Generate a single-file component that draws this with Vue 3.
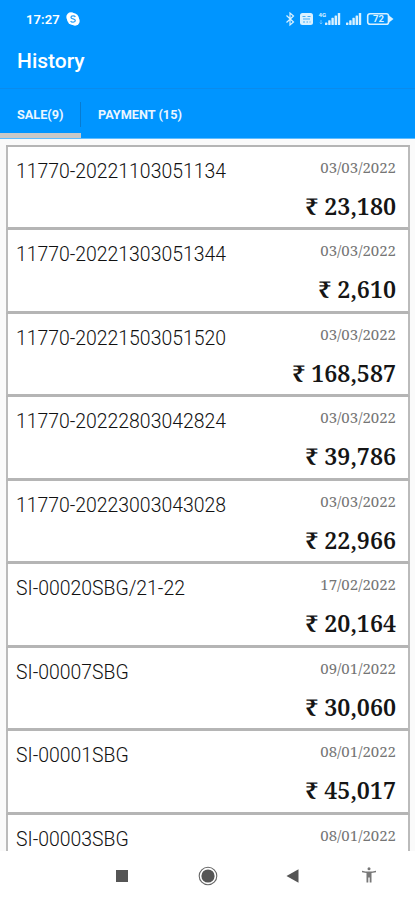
<template>
  <div class="screen">
    <header class="header">
      <div class="status-bar">
        <span class="clock">17:27</span>
        <svg class="skype" viewBox="0 0 14 14">
          <circle cx="5" cy="5" r="4.7" fill="#fff" />
          <circle cx="9" cy="9" r="4.7" fill="#fff" />
          <circle cx="7" cy="7" r="6" fill="#fff" />
          <path d="M9.300 5C8.700 3.500 5 3.500 5 5.400c0 2 4.300 1.100 4.300 3.200 0 2-3.900 2-4.600.3" fill="none" stroke="#2ba0f4" stroke-width="1.3" />
        </svg>
        <svg class="indicators" viewBox="0 0 110 16">
          <path d="M1.500 4.500l7 6.500L5 14V2l3.500 3-7 6.500" fill="none" stroke="#d9f1ff" stroke-width="1.200" />
          <rect x="15" y="2" width="13" height="12" rx="2.5" fill="#d9f1ff" />
          <path d="M17.500 5.500h3m2 0h3M18 8h7M18 11h2m1.500 0h1.500m1.500 0h1" stroke="#45adf8" stroke-width="1.100" />
          <text x="33.5" y="6" class="network">4G</text>
          <path d="M36 9v4m-1.300-1.300L36 13l1.300-1.300" fill="none" stroke="#7fc9ff" stroke-width=".8" />
          <g v-for="x in [40, 61]" :key="x" fill="#d9f1ff">
            <rect
              v-for="n in 5"
              :key="n"
              :x="x + (n - 1) * 3.2"
              :y="14 - n * 2.4"
              width="2.4"
              :height="n * 2.4"
              rx=".6"
            />
          </g>
          <path d="M85 2.700h16.500a2 2 0 0 1 2 2v6.600a2 2 0 0 1-2 2H85a2.300 2.300 0 0 1-2.300-2.300V5A2.300 2.300 0 0 1 85 2.700z" fill="none" stroke="#d9f1ff" stroke-width="1.6" />
          <path d="M104 4.500l4.500 3.500-4.500 3.500z" fill="#d9f1ff" />
          <text x="88" y="11.3" class="charge">72</text>
        </svg>
      </div>
      <h1 class="title">History</h1>
      <nav class="tabs">
        <button class="tab active">SALE(9)</button>
        <button class="tab">PAYMENT (15)</button>
      </nav>
    </header>

    <main class="content">
      <div class="list">
        <article v-for="item in sales" :key="item.id" class="card">
          <span class="number">{{ item.id }}</span>
          <div class="details">
            <span class="date">{{ item.date }}</span>
            <span v-if="item.amount" class="amount">₹ {{ item.amount }}</span>
          </div>
        </article>
      </div>
    </main>

    <footer class="nav-bar">
      <svg viewBox="0 0 24 24"><rect x="6" y="6" width="12" height="12" fill="#555" /></svg>
      <svg viewBox="0 0 24 24">
        <circle cx="12" cy="12" r="8.8" fill="none" stroke="#666" stroke-width="1.1" />
        <circle cx="12" cy="12" r="6.6" fill="#555" />
      </svg>
      <svg viewBox="0 0 24 24"><path d="M5.500 12L17.500 5.300v13.400z" fill="#555" /></svg>
      <svg class="accessibility" viewBox="0 0 24 24">
        <circle cx="12" cy="4.800" r="1.5" fill="#777" />
        <path d="M5 6.700q7 1.700 14 0v1.500l-4.500.8V18.500H12.700v-5h-1.400v5H9.500V9L5 8.200z" fill="#777" />
      </svg>
    </footer>
  </div>
</template>

<script setup>
const sales = [
  { id: '11770-20221103051134', date: '03/03/2022', amount: '23,180' },
  { id: '11770-20221303051344', date: '03/03/2022', amount: '2,610' },
  { id: '11770-20221503051520', date: '03/03/2022', amount: '168,587' },
  { id: '11770-20222803042824', date: '03/03/2022', amount: '39,786' },
  { id: '11770-20223003043028', date: '03/03/2022', amount: '22,966' },
  { id: 'SI-00020SBG/21-22', date: '17/02/2022', amount: '20,164' },
  { id: 'SI-00007SBG', date: '09/01/2022', amount: '30,060' },
  { id: 'SI-00001SBG', date: '08/01/2022', amount: '45,017' },
  { id: 'SI-00003SBG', date: '08/01/2022' },
];
</script>

<style>
body {
  margin: 0;
}
</style>

<style scoped>
.screen {
  display: flex;
  flex-direction: column;
  height: 900px;
  overflow: hidden;
  background: #fff;
  font-family: Roboto, sans-serif;
}

.header {
  flex: none;
  height: 138px;
  background: #0095ff;
  color: #fff;
  border-bottom: 1px solid #5fbdff;
}

.status-bar {
  display: flex;
  align-items: center;
  height: 38px;
  padding: 0 20px 0 26px;
}

.clock {
  width: 40px;
  font-size: 13px;
  font-weight: 600;
  letter-spacing: 0.1px;
}

.skype {
  width: 14px;
  height: 14px;
}

.indicators {
  width: 110px;
  height: 16px;
  margin-left: auto;
}

.network {
  font-size: 6px;
  font-weight: 700;
  fill: #d9f1ff;
}

.charge {
  font-size: 9.5px;
  font-weight: 700;
  fill: #d9f1ff;
}

.title {
  box-sizing: border-box;
  height: 51px;
  margin: 0;
  padding: 9px 17px 0;
  border-bottom: 1px solid #0b8bec;
  font-size: 21px;
  font-weight: 500;
  line-height: 28px;
}

.tabs {
  display: flex;
  height: 49px;
}

.tab {
  position: relative;
  padding: 7px 17px 0;
  border: 0;
  border-bottom: 5px solid transparent;
  background: none;
  color: #eaf6ff;
  font: 700 12.7px Roboto, sans-serif;
}

.tab.active {
  width: 81px;
  padding-right: 0;
  text-align: left;
  border-bottom-color: #c8c8c8;
}

.tab.active::after {
  content: '';
  position: absolute;
  top: 13px;
  right: 0;
  width: 1px;
  height: 25px;
  background: #087bd0;
}

.content {
  flex: 1;
  min-height: 0;
  overflow: hidden;
  padding: 6px 5px 0 6px;
  background: #fafafa;
}

.list {
  border-top: 2px solid #b5b5b5;
}

.card {
  display: flex;
  justify-content: space-between;
  box-sizing: border-box;
  height: 83.45px;
  padding: 0 12px 0 8px;
  border: 2px solid #bbb;
  border-top: 0;
  border-bottom: 3px solid #b5b5b5;
  background: #fff;
}

.number {
  padding-top: 13px;
  color: #111;
  font-size: 19.4px;
  font-weight: 300;
  line-height: 24px;
}

.details {
  display: flex;
  flex-direction: column;
  align-items: flex-end;
}

.date {
  padding-top: 10px;
  color: #757575;
  font-family: 'Noto Serif', 'Liberation Serif', serif;
  font-size: 15px;
  line-height: 20px;
}

.amount {
  padding-top: 14px;
  color: #151515;
  font-family: 'Noto Serif', 'DejaVu Serif', serif;
  font-size: 23.2px;
  font-weight: 600;
  line-height: 30px;
}

.nav-bar {
  display: flex;
  flex: none;
  align-items: center;
  gap: 61.5px;
  height: 49px;
  padding-left: 110px;
}

.nav-bar svg {
  width: 24px;
  height: 24px;
}

.nav-bar .accessibility {
  margin-left: -9.5px;
}
</style>
